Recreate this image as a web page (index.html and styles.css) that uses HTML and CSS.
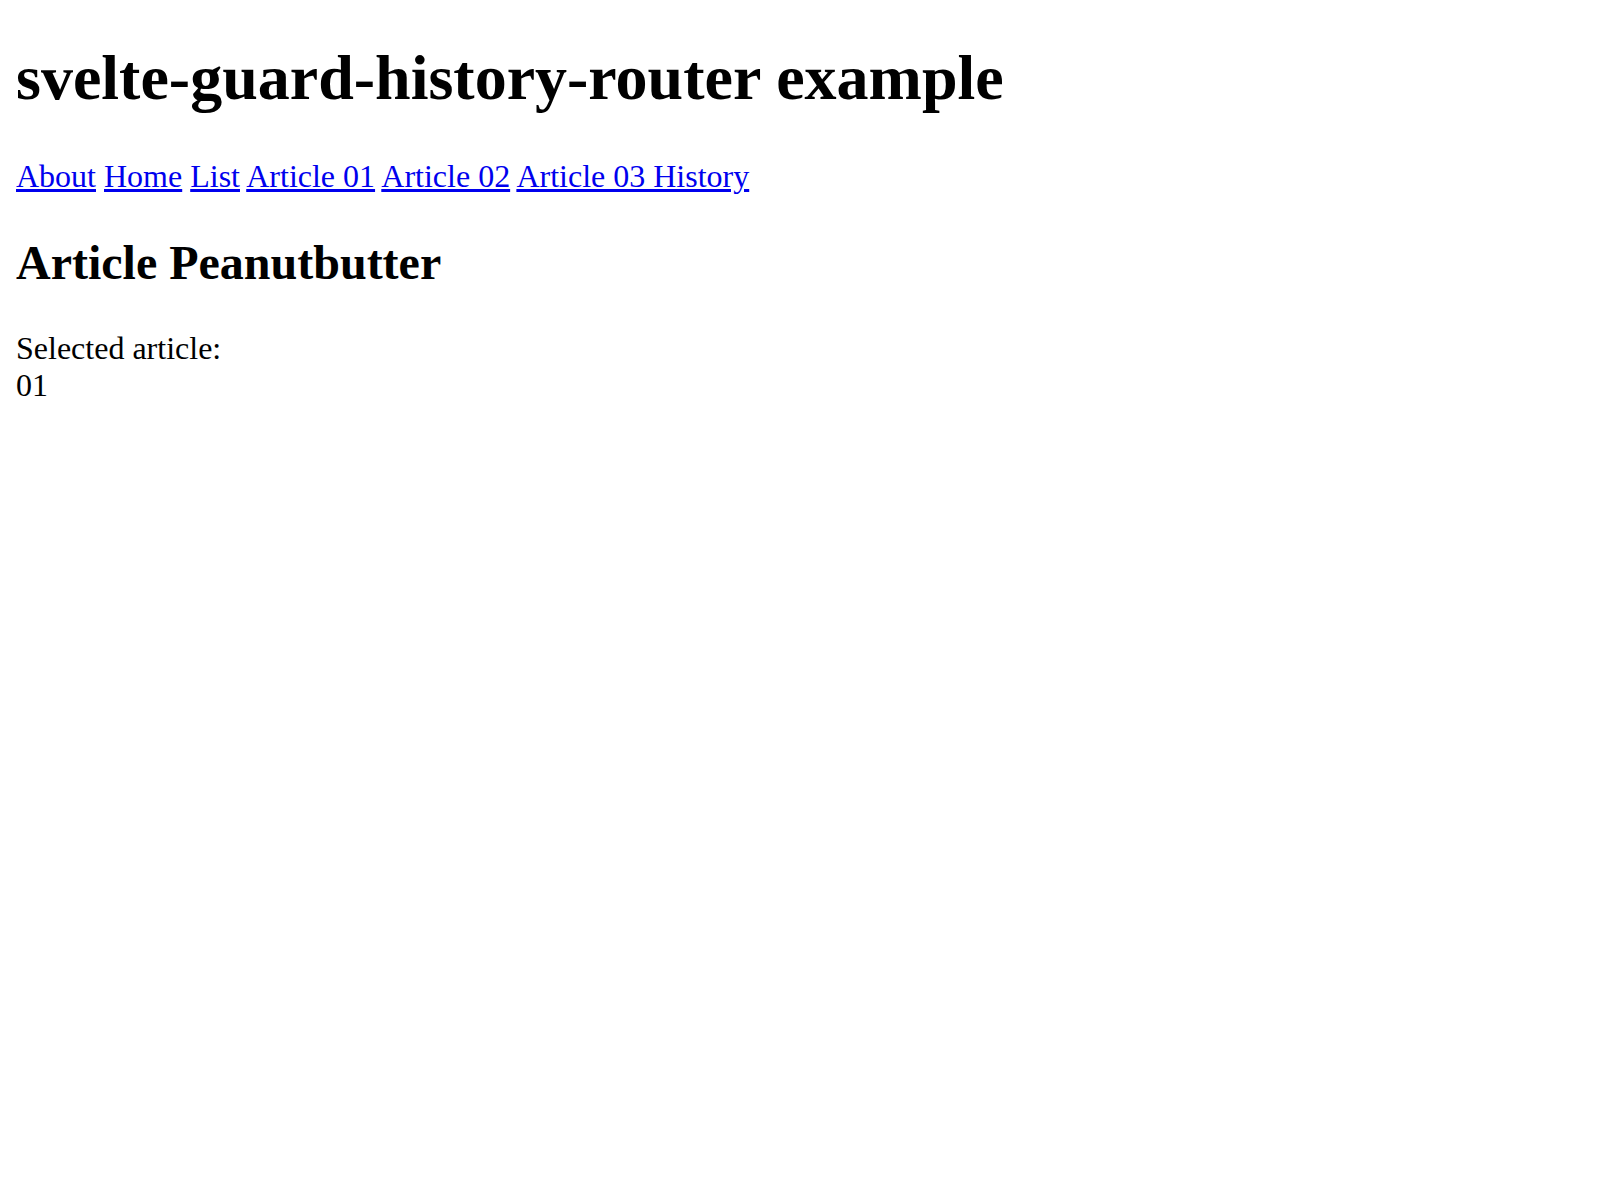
FILE: index.html
```html
<!DOCTYPE html>
<html>
<head>
<meta charset="utf-8">
<title>svelte-guard-history-router example</title>
<link rel="stylesheet" href="styles.css">
</head>
<body>
<h1 class="title">svelte-guard-history-router example</h1>
<nav class="nav">
<a href="#">About</a>
<a href="#">Home</a>
<a href="#">List</a>
<a href="#">Article 01</a>
<a href="#">Article 02</a>
<a href="#">Article 03 History</a>
</nav>
<h2 class="article-title">Article Peanutbutter</h2>
<div class="content">
<div class="label">Selected article:</div>
<div class="value">01</div>
</div>
</body>
</html>
```

FILE: styles.css
```css
html, body {
  background: #fff;
}
body {
  margin: 16px;
  font-family: "Liberation Serif", "Times New Roman", serif;
  font-size: 32px;
  color: #000;
}
.title {
  font-size: 64px;
  font-weight: bold;
  margin: 25px 0 42.88px;
}
.nav a {
  color: #0000ee;
  text-decoration: underline;
}
.article-title {
  font-size: 48px;
  font-weight: bold;
  margin: 39.84px 0;
}
```
